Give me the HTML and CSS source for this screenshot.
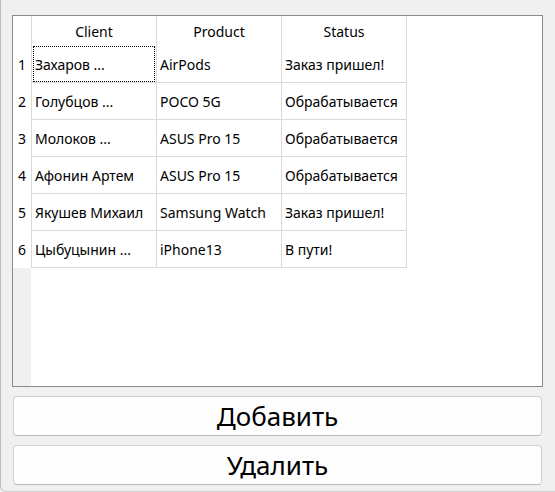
FILE: index.html
```html
<!DOCTYPE html>
<html lang="ru">
<head>
<meta charset="utf-8">
<link rel="stylesheet" href="styles.css">
</head>
<body>
<div class="window">
  <div class="view">
    <table class="grid">
      <thead>
        <tr>
          <th class="corner"></th>
          <th class="hcol">Client</th>
          <th class="hcol">Product</th>
          <th class="hcol">Status</th>
        </tr>
      </thead>
      <tbody>
        <tr><th class="rh">1</th><td class="focus"><span class="t">Захаров ...</span></td><td><span class="t">AirPods</span></td><td><span class="t">Заказ пришел!</span></td></tr>
        <tr><th class="rh">2</th><td><span class="t">Голубцов ...</span></td><td><span class="t">POCO 5G</span></td><td><span class="t">Обрабатывается</span></td></tr>
        <tr><th class="rh">3</th><td><span class="t">Молоков ...</span></td><td><span class="t">ASUS Pro 15</span></td><td><span class="t">Обрабатывается</span></td></tr>
        <tr><th class="rh">4</th><td><span class="t">Афонин Артем</span></td><td><span class="t">ASUS Pro 15</span></td><td><span class="t">Обрабатывается</span></td></tr>
        <tr><th class="rh">5</th><td><span class="t">Якушев Михаил</span></td><td><span class="t">Samsung Watch</span></td><td><span class="t">Заказ пришел!</span></td></tr>
        <tr><th class="rh">6</th><td><span class="t">Цыбуцынин ...</span></td><td><span class="t">iPhone13</span></td><td><span class="t">В пути!</span></td></tr>
      </tbody>
    </table>
  </div>
  <button class="btn" type="button">Добавить</button>
  <button class="btn" type="button">Удалить</button>
</div>
</body>
</html>
```
FILE: styles.css
```css
html, body {
  margin: 0;
  padding: 0;
  background: #f0f0f0;
}
body {
  width: 555px;
  height: 492px;
  overflow: hidden;
}
.window {
  box-sizing: border-box;
  width: 555px;
  height: 492px;
  border-left: 1px solid #bcbcbc;
  border-bottom: 1px solid #cfcfcf;
  border-bottom-left-radius: 6px;
  padding: 15px 12px 0 11px;
  display: flex;
  flex-direction: column;
  align-items: flex-start;
  font-family: "Noto Sans", "Open Sans", sans-serif;
  color: #000;
}
.view {
  box-sizing: border-box;
  flex: 0 0 auto;
  width: 531px;
  height: 372px;
  border: 1px solid #878a8f;
  background:
    linear-gradient(#f0f0f0, #f0f0f0) left top / 18px 100% no-repeat,
    #ffffff;
  margin-bottom: 9px;
}
.grid {
  border-collapse: separate;
  border-spacing: 0;
  table-layout: fixed;
  font-size: 14px;
  background: #ffffff;
}
.grid th, .grid td {
  padding: 0;
  font-weight: normal;
  white-space: nowrap;
  overflow: hidden;
}
.corner {
  width: 18px;
  height: 30px;
  border-right: 1px solid #d9d9d9;
}
.hcol {
  width: 124px;
  height: 30px;
  border-right: 1px solid #d9d9d9;
  text-align: center;
  vertical-align: middle;
}
.rh {
  width: 18px;
  height: 36px;
  border-right: 1px solid #d9d9d9;
  text-align: center;
  vertical-align: middle;
}
.grid td {
  width: 124px;
  height: 36px;
  border-right: 1px solid #d9d9d9;
  border-bottom: 1px solid #d9d9d9;
  text-align: left;
  vertical-align: middle;
  position: relative;
}
.t {
  display: block;
  padding-left: 3px;
}
.focus::after {
  content: "";
  position: absolute;
  left: 1px;
  right: 1px;
  top: 0;
  bottom: 0;
  border: 1px dotted #000;
}
.btn {
  box-sizing: border-box;
  flex: 0 0 auto;
  width: 529px;
  height: 40px;
  margin: 0 0 9px 1px;
  border: 1px solid #d0d0d0;
  border-bottom-color: #b9b9b9;
  border-radius: 4px;
  background: #fdfdfd;
  font-family: "Noto Sans", "Open Sans", sans-serif;
  font-size: 26px;
  color: #000;
  padding: 0;
  line-height: 38px;
}
```
